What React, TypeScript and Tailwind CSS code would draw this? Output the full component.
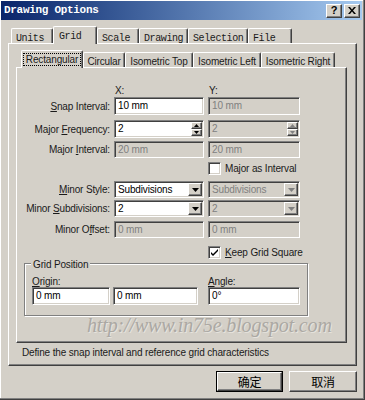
import React from 'react';

const sunken =
  'border border-t-[#808080] border-l-[#808080] border-b-white border-r-white shadow-[inset_1px_1px_0_#404040,inset_-1px_-1px_0_#d4d0c8]';
const raised =
  'border border-t-white border-l-white border-b-[#404040] border-r-[#404040] shadow-[inset_-1px_-1px_0_#808080]';

function Arrow({ dir = 'down', size = 'big', gray = false }: { dir?: 'up' | 'down'; size?: 'big' | 'small'; gray?: boolean }) {
  const fill = gray ? '#808080' : '#000000';
  if (size === 'small') {
    return (
      <svg width="5" height="3" viewBox="0 0 5 3">
        <path d={dir === 'up' ? 'M2.5 0L5 3H0z' : 'M0 0h5L2.5 3z'} fill={fill} />
      </svg>
    );
  }
  return (
    <svg width="7" height="4" viewBox="0 0 7 4">
      <path d="M0 0h7L3.5 4z" fill={fill} />
    </svg>
  );
}

function Field({
  value,
  w,
  h = 'h-[18px]',
  disabled,
  spin,
  drop,
}: {
  value: string;
  w: string;
  h?: string;
  disabled?: boolean;
  spin?: boolean;
  drop?: boolean;
}) {
  return (
    <div className={`${w} ${h} ${sunken} ${disabled ? 'bg-[#d4d0c8] text-[#808080]' : 'bg-white text-black'} flex items-stretch p-[1px]`}>
      <div className="flex-1 flex items-center pl-[2px] leading-none">{value}</div>
      {spin && (
        <div className="w-[11px] flex flex-col">
          <div className={`flex-1 ${raised} bg-[#d4d0c8] flex items-center justify-center`}>
            <Arrow dir="up" size="small" gray={disabled} />
          </div>
          <div className={`flex-1 ${raised} bg-[#d4d0c8] flex items-center justify-center`}>
            <Arrow dir="down" size="small" gray={disabled} />
          </div>
        </div>
      )}
      {drop && (
        <div className={`w-[14px] ${raised} bg-[#d4d0c8] flex items-center justify-center`}>
          <Arrow gray={disabled} />
        </div>
      )}
    </div>
  );
}

function Check({ checked }: { checked?: boolean }) {
  return (
    <div className={`w-[13px] h-[13px] bg-white ${sunken} flex items-center justify-center`}>
      {checked && (
        <svg width="7" height="7" viewBox="0 0 7 7">
          <path d="M0 3l2 2 5-5v2L2 7 0 5z" fill="#000" />
        </svg>
      )}
    </div>
  );
}

function Row({ label, children, className = '' }: { label: React.ReactNode; children: React.ReactNode; className?: string }) {
  return (
    <div className={`flex items-center ${className}`}>
      <span className="w-[97px] pr-[4px] text-right whitespace-nowrap">{label}</span>
      {children}
    </div>
  );
}

const U = ({ c }: { c: string }) => <span className="underline underline-offset-[1px]">{c}</span>;

export default function App() {
  const outerTabs = [
    { t: 'Units', w: 'w-[42px]' },
    { t: 'Grid', w: 'w-[44px]', active: true },
    { t: 'Scale', w: 'w-[42px]' },
    { t: 'Drawing', w: 'w-[49px]' },
    { t: 'Selection', w: 'w-[60px]' },
    { t: 'File', w: 'w-[44px]' },
  ];
  const innerTabs = [
    { t: 'Rectangular', w: 'w-[62px]', active: true },
    { t: 'Circular', w: 'w-[42px]' },
    { t: 'Isometric Top', w: 'w-[68px]' },
    { t: 'Isometric Left', w: 'w-[68px]' },
    { t: 'Isometric Right', w: 'w-[74px]' },
  ];

  return (
    <div className="w-[365px] h-[400px] bg-[#d4d0c8] flex flex-col overflow-hidden text-[10px] tracking-[-0.15px] text-[#1a1a1a] font-['Liberation_Sans',Arial,sans-serif] shadow-[inset_-1px_-1px_0_#404040,inset_-2px_-2px_0_#808080,inset_1px_1px_0_#ffffff]">
      {/* title bar */}
      <div className="mt-[1px] ml-[1px] mr-[3px] h-[19px] bg-gradient-to-r from-[#0a246a] to-[#a6caf0] flex items-center pl-[3px] pr-[2px]">
        <span className="text-white font-bold text-[11px] tracking-[-0.3px] font-['Liberation_Mono',monospace]">Drawing Options</span>
        <div className="ml-auto flex gap-[2px]">
          <div className={`w-[16px] h-[14px] bg-[#d4d0c8] ${raised} flex items-center justify-center text-[11px] font-bold leading-none text-black`}>?</div>
          <div className={`w-[16px] h-[14px] bg-[#d4d0c8] ${raised} flex items-center justify-center`}>
            <svg width="8" height="7" viewBox="0 0 8 7">
              <path d="M0 0h2l2 2.5L6 0h2L5 3.5 8 7H6L4 4.5 2 7H0l3-3.5z" fill="#000" />
            </svg>
          </div>
        </div>
      </div>

      {/* outer tabs */}
      <div className="h-[23px] flex items-end pl-[11px] font-['Liberation_Mono',monospace] text-[10px] tracking-[-0.4px]">
        {outerTabs.map((tab) =>
          tab.active ? (
            <div
              key={tab.t}
              className={`${tab.w} h-[18px] -mb-px relative z-10 bg-[#d4d0c8] border-t border-l border-white border-r border-r-[#404040] shadow-[inset_-1px_0_0_#808080] rounded-t-[2px] pl-[5px] pt-[2px]`}
            >
              {tab.t}
            </div>
          ) : (
            <div
              key={tab.t}
              className={`${tab.w} h-[15px] border-t border-l border-white border-r border-r-[#404040] shadow-[inset_-1px_0_0_#808080] rounded-t-[2px] pl-[4px] pt-[2px]`}
            >
              {tab.t}
            </div>
          )
        )}
      </div>

      {/* outer panel */}
      <div className={`ml-[8px] w-[349px] h-[323px] ${raised} flex flex-col`}>
        <div className="h-[23px] flex items-end pl-[12px]">
          {innerTabs.map((tab) =>
            tab.active ? (
              <div
                key={tab.t}
                className={`${tab.w} h-[18px] -mb-px relative z-10 bg-[#d4d0c8] border-t border-l border-white border-r border-r-[#404040] shadow-[inset_-1px_0_0_#808080] rounded-t-[2px] flex items-start justify-center pt-[2px]`}
              >
                <span className="border border-dotted border-black px-[2px] leading-[11px]">{tab.t}</span>
              </div>
            ) : (
              <div
                key={tab.t}
                className={`${tab.w} h-[15px] border-t border-l border-white border-r border-r-[#404040] shadow-[inset_-1px_0_0_#808080] rounded-t-[2px] flex items-start justify-center pt-[1px] whitespace-nowrap`}
              >
                {tab.t}
              </div>
            )
          )}
        </div>

        {/* inner panel */}
        <div className={`ml-[7px] w-[331px] h-[276px] ${raised} relative flex flex-col`}>
          <div className="mt-[16px] h-[12px] flex items-center">
            <span className="w-[97px]" />
            <span className="w-[90px] ml-[1px]">X:</span>
            <span className="ml-[4px]">Y:</span>
          </div>
          <Row label={<><U c="S" />nap Interval:</>} className="mt-[1px]">
            <Field value="10 mm" w="w-[90px]" />
            <div className="ml-[4px]"><Field value="10 mm" w="w-[92px]" disabled /></div>
          </Row>
          <Row label={<>Major <U c="F" />requency:</>} className="mt-[5px]">
            <Field value="2" w="w-[90px]" spin />
            <div className="ml-[4px]"><Field value="2" w="w-[92px]" disabled spin /></div>
          </Row>
          <Row label={<>Major <U c="I" />nterval:</>} className="mt-[3px]">
            <Field value="20 mm" w="w-[90px]" h="h-[17px]" disabled />
            <div className="ml-[4px]"><Field value="20 mm" w="w-[92px]" h="h-[17px]" disabled /></div>
          </Row>
          <div className="mt-[2px] h-[16px] flex items-center pl-[191px] gap-[4px]">
            <Check />
            <span>Major as Interval</span>
          </div>
          <Row label={<><U c="M" />inor Style:</>} className="mt-[5px]">
            <Field value="Subdivisions" w="w-[90px]" h="h-[17px]" drop />
            <div className="ml-[4px]"><Field value="Subdivisions" w="w-[92px]" h="h-[17px]" disabled drop /></div>
          </Row>
          <Row label={<>Minor <U c="S" />ubdivisions:</>} className="mt-[2px]">
            <Field value="2" w="w-[90px]" h="h-[17px]" drop />
            <div className="ml-[4px]"><Field value="2" w="w-[92px]" h="h-[17px]" disabled drop /></div>
          </Row>
          <Row label={<>Minor O<U c="f" />fset:</>} className="mt-[4px]">
            <Field value="0 mm" w="w-[90px]" h="h-[17px]" disabled />
            <div className="ml-[4px]"><Field value="0 mm" w="w-[92px]" h="h-[17px]" disabled /></div>
          </Row>
          <div className="mt-[6px] h-[16px] flex items-center pl-[191px] gap-[4px]">
            <Check checked />
            <span><U c="K" />eep Grid Square</span>
          </div>

          {/* group box */}
          <div className="mt-[3px] ml-[7px] w-[284px] h-[53px] relative border border-[#808080] shadow-[inset_1px_1px_0_#ffffff,1px_1px_0_#ffffff] pl-[7px] pt-[13px] flex">
            <span className="absolute -top-[7px] left-[6px] px-[2px] bg-[#d4d0c8]">Grid Position</span>
            <div className="flex flex-col">
              <span className="h-[10px] leading-[10px]"><U c="O" />rigin:</span>
              <div className="flex gap-[3px]">
                <Field value="0 mm" w="w-[78px]" />
                <Field value="0 mm" w="w-[85px]" />
              </div>
            </div>
            <div className="flex flex-col ml-[10px]">
              <span className="h-[10px] leading-[10px]"><U c="A" />ngle:</span>
              <Field value="0°" w="w-[92px]" />
            </div>
          </div>

          <span className="absolute left-[70px] top-[242px] text-[20px] italic text-[#aba8a3] font-['Liberation_Serif',serif] whitespace-nowrap [text-shadow:1px_1px_0_#e6e3dd]">
            http://www.in75e.blogspot.com
          </span>
        </div>

        <div className="mt-[3px] h-[12px] flex items-center pl-[13px] whitespace-nowrap">
          Define the snap interval and reference grid characteristics
        </div>
      </div>

      {/* buttons */}
      <div className="mt-[5px] flex justify-end gap-[6px] pr-[8px] text-[12px] text-black font-['Noto_Sans_CJK_SC',sans-serif]">
        <div className="w-[67px] h-[21px] border border-black">
          <div className={`w-full h-full ${raised} flex items-center justify-center leading-none`}>确定</div>
        </div>
        <div className={`w-[68px] h-[21px] ${raised} flex items-center justify-center leading-none`}>取消</div>
      </div>
    </div>
  );
}
